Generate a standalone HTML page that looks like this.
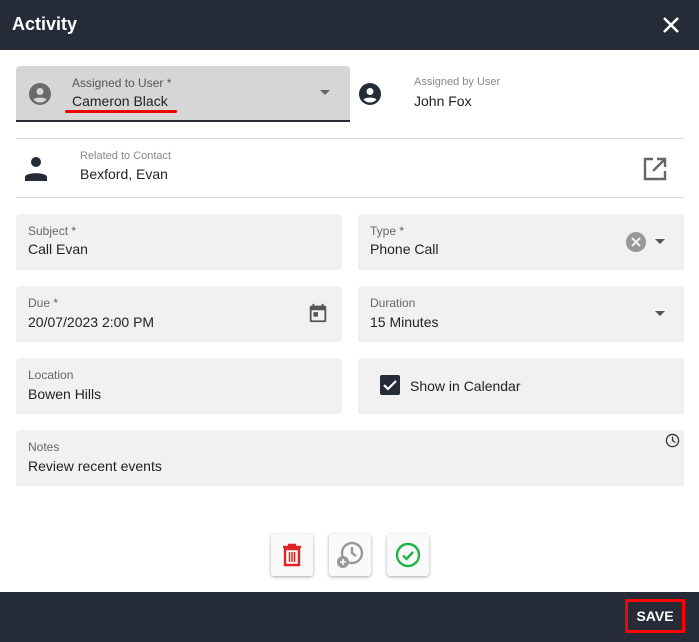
<!DOCTYPE html><html><head><style>
*{margin:0;padding:0;box-sizing:border-box}
body{width:699px;height:642px;position:relative;background:#fff;font-family:"Liberation Sans",sans-serif;overflow:hidden}
.a{position:absolute}
.hdr{left:0;top:0;width:699px;height:50px;background:#252b37;color:#fff}
.ftr{left:0;top:592px;width:699px;height:50px;background:#252b37}
.f{position:absolute;background:#f1f1f1;border-radius:4px 4px 0 0;width:326px;height:56px}
.lb{position:absolute;font-size:12px;color:#666}
.v{position:absolute;font-size:14px;color:#222}
.btn{position:absolute;top:534px;width:42px;height:42px;background:#fafafa;border-radius:3px;box-shadow:0 1px 3px rgba(0,0,0,.35);display:flex;align-items:center;justify-content:center}
</style></head><body>
<div class="a hdr"><div class="a" style="left:12px;top:14px;font-size:18px;font-weight:bold">Activity</div>
<svg class="a" style="left:661px;top:15px" width="20" height="20" viewBox="0 0 20 20"><path d="M3 3L17 17M17 3L3 17" stroke="#fff" stroke-width="2.6"/></svg></div>

<div class="a" style="left:16px;top:66px;width:334px;height:56px;background:#d6d6d6;border-radius:4px 4px 0 0;border-bottom:2px solid #252b37"></div>
<svg class="a" style="left:28px;top:82px" width="24" height="24" viewBox="0 0 24 24"><circle cx="12" cy="12" r="11" fill="#6b6b6b"/><circle cx="12" cy="9.5" r="3.5" fill="#d6d6d6"/><path d="M5.5 17.5c2-2.5 11-2.5 13 0a8.5 8.5 0 0 1-13 0z" fill="#d6d6d6"/></svg>
<div class="lb" style="left:72px;top:76px;color:#555">Assigned to User *</div>
<div class="v" style="left:72px;top:93px;font-size:14px">Cameron Black</div>
<div class="a" style="left:65px;top:110px;width:112px;height:3px;background:#e00;border-radius:2px"></div>
<svg class="a" style="left:320px;top:90px" width="10" height="6"><path d="M0 0h10L5 5z" fill="#666"/></svg>
<svg class="a" style="left:358px;top:82px" width="24" height="24" viewBox="0 0 24 24"><circle cx="12" cy="12" r="11" fill="#252b37"/><circle cx="12" cy="9.5" r="3.5" fill="#fff"/><path d="M5.5 17.5c2-2.5 11-2.5 13 0a8.5 8.5 0 0 1-13 0z" fill="#fff"/></svg>
<div class="lb" style="left:414px;top:76px;font-size:11px;color:#888">Assigned by User</div>
<div class="v" style="left:414px;top:93px">John Fox</div>
<div class="a" style="left:16px;top:138px;width:668px;height:1px;background:#ddd"></div>
<svg class="a" style="left:24px;top:155px" width="24" height="26" viewBox="0 0 24 26"><circle cx="12" cy="7" r="5" fill="#252b37"/><path d="M1 26v-4c0-5 22-5 22 0v4z" fill="#252b37"/></svg>
<div class="lb" style="left:80px;top:150px;font-size:11px;color:#888">Related to Contact</div>
<div class="v" style="left:80px;top:166px">Bexford, Evan</div>
<svg class="a" style="left:642px;top:156px" width="26" height="26" viewBox="0 0 26 26"><path d="M11 3H3v20h20v-8" fill="none" stroke="#666" stroke-width="2.4"/><path d="M15 3h8v8M23 3L11 15" fill="none" stroke="#666" stroke-width="2.4"/></svg>
<div class="a" style="left:16px;top:197px;width:668px;height:1px;background:#ddd"></div>

<div class="f" style="left:16px;top:214px"></div><div class="lb" style="left:28px;top:224px">Subject *</div><div class="v" style="left:28px;top:241px">Call Evan</div>
<div class="f" style="left:358px;top:214px"></div><div class="lb" style="left:370px;top:224px">Type *</div><div class="v" style="left:370px;top:241px">Phone Call</div>
<svg class="a" style="left:626px;top:232px" width="20" height="20" viewBox="0 0 20 20"><circle cx="10" cy="10" r="10" fill="#999"/><path d="M6 6l8 8M14 6l-8 8" stroke="#f1f1f1" stroke-width="2"/></svg>
<svg class="a" style="left:655px;top:239px" width="10" height="6"><path d="M0 0h10L5 5z" fill="#555"/></svg>
<div class="f" style="left:16px;top:286px"></div><div class="lb" style="left:28px;top:296px">Due *</div><div class="v" style="left:28px;top:314px">20/07/2023 2:00 PM</div>
<svg class="a" style="left:307px;top:302px" width="22" height="22" viewBox="0 0 24 24"><path d="M19 4h-1V2h-2v2H8V2H6v2H5a2 2 0 0 0-2 2v14a2 2 0 0 0 2 2h14a2 2 0 0 0 2-2V6a2 2 0 0 0-2-2zm0 16H5V9h14zM7 11h5v5H7z" fill="#555"/></svg>
<div class="f" style="left:358px;top:286px"></div><div class="lb" style="left:370px;top:296px">Duration</div><div class="v" style="left:370px;top:314px">15 Minutes</div>
<svg class="a" style="left:655px;top:311px" width="10" height="6"><path d="M0 0h10L5 5z" fill="#555"/></svg>
<div class="f" style="left:16px;top:358px"></div><div class="lb" style="left:28px;top:368px">Location</div><div class="v" style="left:28px;top:386px">Bowen Hills</div>
<div class="f" style="left:358px;top:358px"></div>
<svg class="a" style="left:380px;top:375px" width="20" height="20" viewBox="0 0 20 20"><rect width="20" height="20" rx="2" fill="#252b37"/><path d="M4 10l4 4 8-8" stroke="#fff" stroke-width="2.2" fill="none"/></svg>
<div class="v" style="left:410px;top:378px">Show in Calendar</div>
<div class="f" style="left:16px;top:430px;width:668px"></div><div class="lb" style="left:28px;top:440px">Notes</div><div class="v" style="left:28px;top:458px">Review recent events</div>
<svg class="a" style="left:665px;top:433px" width="15" height="15" viewBox="0 0 16 16"><circle cx="8" cy="8" r="6.5" fill="none" stroke="#333" stroke-width="1.4"/><path d="M8 4v4l3 2" fill="none" stroke="#333" stroke-width="1.4"/></svg>

<div class="btn" style="left:271px"><svg width="20" height="24" viewBox="0 0 20 24"><path d="M6 2h8M1 4h18" stroke="#e02424" stroke-width="2.4"/><path d="M3 6h14v16H3z" fill="none" stroke="#e02424" stroke-width="2.4"/><path d="M7.5 9v10M10 9v10M12.5 9v10" stroke="#e02424" stroke-width="1.5"/></svg></div>
<div class="btn" style="left:329px"><svg width="28" height="28" viewBox="0 0 28 28"><circle cx="16" cy="12" r="10" fill="none" stroke="#999" stroke-width="2.4"/><path d="M16 6v6l4 3" fill="none" stroke="#999" stroke-width="2.4"/><circle cx="7" cy="21" r="6" fill="#999"/><path d="M7 18v6M4 21h6" stroke="#fff" stroke-width="1.6"/></svg></div>
<div class="btn" style="left:387px"><svg width="26" height="26" viewBox="0 0 26 26"><circle cx="13" cy="13" r="11" fill="none" stroke="#22b34a" stroke-width="2.4"/><path d="M8 13.5l3.5 3.5 6.5-7" fill="none" stroke="#22b34a" stroke-width="2.4"/></svg></div>

<div class="a ftr"><div class="a" style="left:365px;top:7px;width:60px;height:34px;border:3px solid #f00;left:625px;color:#fff;font-weight:bold;font-size:14px;text-align:center;line-height:28px">SAVE</div></div>
</body></html>
